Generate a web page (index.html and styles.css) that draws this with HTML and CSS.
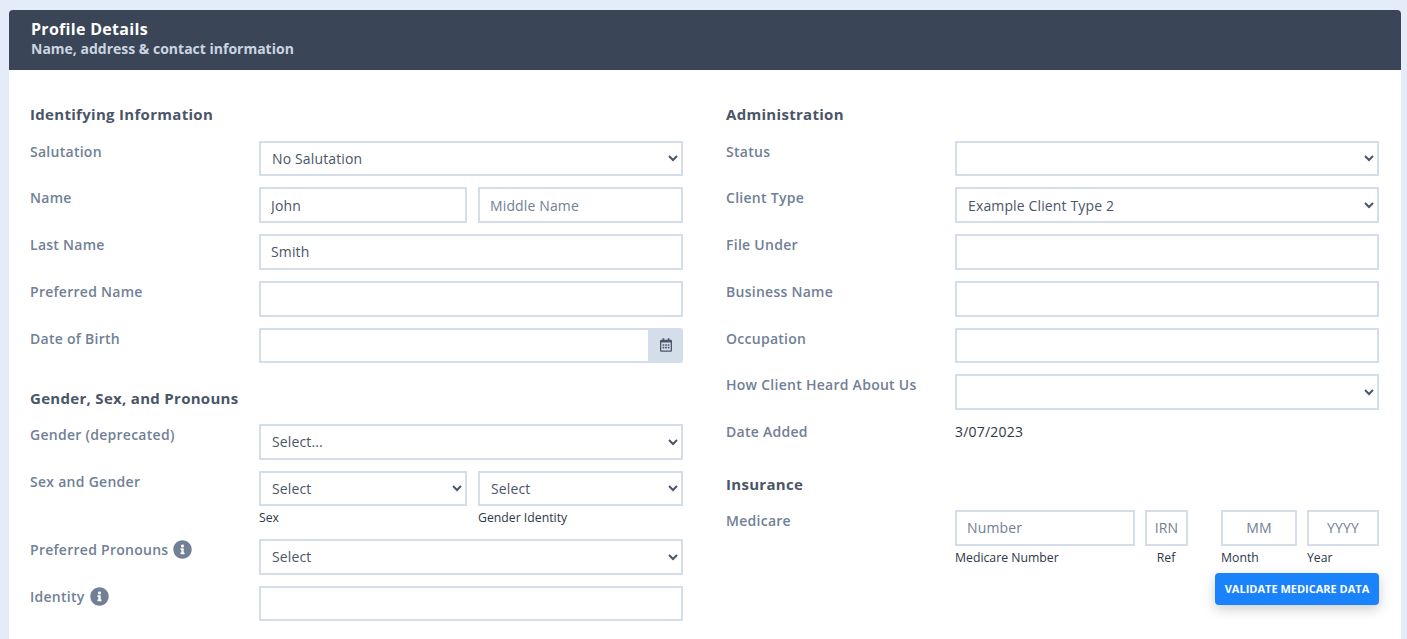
FILE: index.html
```html
<!DOCTYPE html>
<html lang="en">
<head>
<meta charset="utf-8">
<title>Profile Details</title>
<link rel="stylesheet" href="styles.css">
</head>
<body>
<svg class="sprite" width="0" height="0" aria-hidden="true">
  <symbol id="info" viewBox="0 0 512 512"><path d="M256 8C119.043 8 8 119.083 8 256c0 136.997 111.043 248 248 248s248-111.003 248-248C504 119.083 392.957 8 256 8zm0 110c23.196 0 42 18.804 42 42s-18.804 42-42 42-42-18.804-42-42 18.804-42 42-42zm56 254c0 6.627-5.373 12-12 12h-88c-6.627 0-12-5.373-12-12v-24c0-6.627 5.373-12 12-12h12v-64h-12c-6.627 0-12-5.373-12-12v-24c0-6.627 5.373-12 12-12h64c6.627 0 12 5.373 12 12v100h12c6.627 0 12 5.373 12 12v24z"/></symbol>
</svg>
<main class="card">
  <header class="card-header">
    <h1 class="card-title">Profile Details</h1>
    <p class="card-subtitle">Name, address &amp; contact information</p>
  </header>
  <div class="card-body">
    <section class="col">
      <h2 class="section-title">Identifying Information</h2>
      <div class="row">
        <label class="row-label">Salutation</label>
        <select class="control"><option>No Salutation</option></select>
      </div>
      <div class="row">
        <label class="row-label">Name</label>
        <div class="pair">
          <input class="control" type="text" value="John">
          <input class="control" type="text" placeholder="Middle Name">
        </div>
      </div>
      <div class="row">
        <label class="row-label">Last Name</label>
        <input class="control" type="text" value="Smith">
      </div>
      <div class="row">
        <label class="row-label">Preferred Name</label>
        <input class="control" type="text">
      </div>
      <div class="row">
        <label class="row-label">Date of Birth</label>
        <div class="input-group">
          <input class="control" type="text">
          <span class="addon">
            <svg class="cal" viewBox="0 0 448 512"><path d="M148 288h-40c-6.6 0-12-5.4-12-12v-40c0-6.6 5.4-12 12-12h40c6.6 0 12 5.4 12 12v40c0 6.6-5.4 12-12 12zm108-12v-40c0-6.6-5.4-12-12-12h-40c-6.6 0-12 5.4-12 12v40c0 6.6 5.4 12 12 12h40c6.6 0 12-5.4 12-12zm96 0v-40c0-6.6-5.4-12-12-12h-40c-6.6 0-12 5.4-12 12v40c0 6.6 5.4 12 12 12h40c6.6 0 12-5.4 12-12zm-96 96v-40c0-6.6-5.4-12-12-12h-40c-6.6 0-12 5.4-12 12v40c0 6.6 5.4 12 12 12h40c6.6 0 12-5.4 12-12zm-96 0v-40c0-6.6-5.4-12-12-12h-40c-6.6 0-12 5.4-12 12v40c0 6.6 5.4 12 12 12h40c6.6 0 12-5.4 12-12zm192 0v-40c0-6.6-5.4-12-12-12h-40c-6.6 0-12 5.4-12 12v40c0 6.6 5.4 12 12 12h40c6.6 0 12-5.4 12-12zm96-260v352c0 26.5-21.5 48-48 48H48c-26.5 0-48-21.5-48-48V112c0-26.5 21.5-48 48-48h48V12c0-6.6 5.4-12 12-12h40c6.6 0 12 5.4 12 12v52h128V12c0-6.6 5.4-12 12-12h40c6.6 0 12 5.4 12 12v52h48c26.5 0 48 21.5 48 48zm-48 346V160H48v298c0 3.3 2.7 6 6 6h340c3.3 0 6-2.7 6-6z"/></svg>
          </span>
        </div>
      </div>
      <h2 class="section-title section-title-next">Gender, Sex, and Pronouns</h2>
      <div class="row">
        <label class="row-label">Gender (deprecated)</label>
        <select class="control"><option>Select...</option></select>
      </div>
      <div class="row">
        <label class="row-label">Sex and Gender</label>
        <div class="pair">
          <div class="stack">
            <select class="control"><option>Select</option></select>
            <small class="hint">Sex</small>
          </div>
          <div class="stack">
            <select class="control"><option>Select</option></select>
            <small class="hint">Gender Identity</small>
          </div>
        </div>
      </div>
      <div class="row">
        <label class="row-label">Preferred Pronouns <svg class="info"><use href="#info"/></svg></label>
        <select class="control"><option>Select</option></select>
      </div>
      <div class="row">
        <label class="row-label">Identity <svg class="info"><use href="#info"/></svg></label>
        <input class="control" type="text">
      </div>
    </section>

    <section class="col">
      <h2 class="section-title">Administration</h2>
      <div class="row">
        <label class="row-label">Status</label>
        <select class="control"><option></option></select>
      </div>
      <div class="row">
        <label class="row-label">Client Type</label>
        <select class="control"><option>Example Client Type 2</option></select>
      </div>
      <div class="row">
        <label class="row-label">File Under</label>
        <input class="control" type="text">
      </div>
      <div class="row">
        <label class="row-label">Business Name</label>
        <input class="control" type="text">
      </div>
      <div class="row">
        <label class="row-label">Occupation</label>
        <input class="control" type="text">
      </div>
      <div class="row">
        <label class="row-label">How Client Heard About Us</label>
        <select class="control"><option></option></select>
      </div>
      <div class="row">
        <label class="row-label">Date Added</label>
        <span class="static-value">3/07/2023</span>
      </div>
      <h2 class="section-title section-title-ins">Insurance</h2>
      <div class="row">
        <label class="row-label">Medicare</label>
        <div class="medicare">
          <div class="medicare-fields">
            <div class="stack">
              <input class="control" type="text" placeholder="Number">
              <small class="hint">Medicare Number</small>
            </div>
            <div class="stack">
              <input class="control control-tight" type="text" placeholder="IRN">
              <small class="hint hint-center">Ref</small>
            </div>
            <div class="stack m-month">
              <input class="control control-center" type="text" placeholder="MM">
              <small class="hint">Month</small>
            </div>
            <div class="stack">
              <input class="control control-center" type="text" placeholder="YYYY">
              <small class="hint">Year</small>
            </div>
          </div>
          <button class="btn" type="button">VALIDATE MEDICARE DATA</button>
        </div>
      </div>
    </section>
  </div>
</main>
</body>
</html>
```

FILE: styles.css
```css
* {
  box-sizing: border-box;
}

html,
body {
  height: 100%;
  margin: 0;
  overflow: hidden;
}

body {
  background: #e4ecf9;
  padding: 10px 6px 0 9px;
  font-family: "Open Sans", sans-serif;
  font-size: 14px;
  color: #4a5568;
}

.sprite {
  position: absolute;
}

.card {
  height: 100%;
  background: #fff;
  border-radius: 4px 4px 0 0;
}

.card-header {
  height: 60px;
  padding: 9px 22px 0;
  background: #3a4558;
  border-radius: 4px 4px 0 0;
}

.card-title {
  margin: 0;
  font-size: 16px;
  line-height: 20px;
  font-weight: 700;
  letter-spacing: 0.3px;
  color: #fff;
}

.card-subtitle {
  margin: 0;
  font-size: 14px;
  line-height: 19px;
  font-weight: 700;
  color: #cbd5e0;
}

.card-body {
  display: grid;
  grid-template-columns: 653px 653px;
  column-gap: 43px;
  padding: 33px 21px 0;
}

.section-title {
  margin: 0 0 15.5px;
  height: 22px;
  font-size: 15px;
  line-height: 22px;
  font-weight: 700;
  letter-spacing: 0.3px;
  color: #4a5568;
}

.section-title-next {
  margin-top: 24px;
  margin-bottom: 14.5px;
}

.section-title-ins {
  margin-top: 31px;
  margin-bottom: 15px;
}

.row {
  display: grid;
  grid-template-columns: 229px 424px;
  margin-bottom: 11px;
}

.row-label {
  display: flex;
  align-items: center;
  gap: 5px;
  height: 21px;
  font-weight: 600;
  line-height: 21px;
  letter-spacing: 0.27px;
  color: #718096;
}

.control {
  display: block;
  width: 100%;
  min-width: 0;
  height: 35.75px;
  padding: 0 10px;
  border: 2px solid #d4deeb;
  border-radius: 0;
  outline: 0;
  background-color: #fff;
  font-family: inherit;
  font-size: 14px;
  letter-spacing: 0.14px;
  color: #4a5568;
}

select.control {
  padding: 0 7px;
}

.control::placeholder {
  color: #718096;
  opacity: 1;
}

.control-center {
  text-align: center;
}

.control-tight {
  padding: 0;
  text-align: center;
}

.pair {
  display: grid;
  grid-template-columns: 208px 205px;
  column-gap: 11px;
}

.stack {
  display: flex;
  flex-direction: column;
}

.hint {
  height: 21.5px;
  padding-top: 4px;
  font-size: 12.25px;
  line-height: 16px;
  color: #2d3748;
}

.hint-center {
  text-align: center;
  padding-right: 1px;
}

.input-group {
  display: flex;
}

.input-group .control {
  flex: 1;
  border-right: 0;
}

.addon {
  display: flex;
  align-items: center;
  justify-content: center;
  flex: none;
  width: 35px;
  height: 35.75px;
  background: #d4deeb;
  border-radius: 0 3px 3px 0;
}

.cal {
  width: 12px;
  height: 14px;
  fill: #4a5568;
}

.info {
  width: 19px;
  height: 19px;
  fill: #718096;
}

.static-value {
  line-height: 21px;
  letter-spacing: 0.2px;
  color: #2d3748;
}

.medicare {
  display: flex;
  flex-direction: column;
  align-items: flex-end;
}

.medicare-fields {
  display: grid;
  grid-template-columns: 180px 43px 99px 72px;
  column-gap: 10px;
  width: 100%;
}

.m-month {
  margin-left: 23px;
}

.btn {
  width: 164px;
  height: 32px;
  margin-top: 6px;
  padding: 0 0 2px;
  border: 0;
  border-radius: 4px;
  background: #1a82fb;
  box-shadow: 0 4px 12px rgba(45, 55, 72, 0.25);
  font-family: inherit;
  font-size: 11px;
  font-weight: 700;
  color: #fff;
}
```
